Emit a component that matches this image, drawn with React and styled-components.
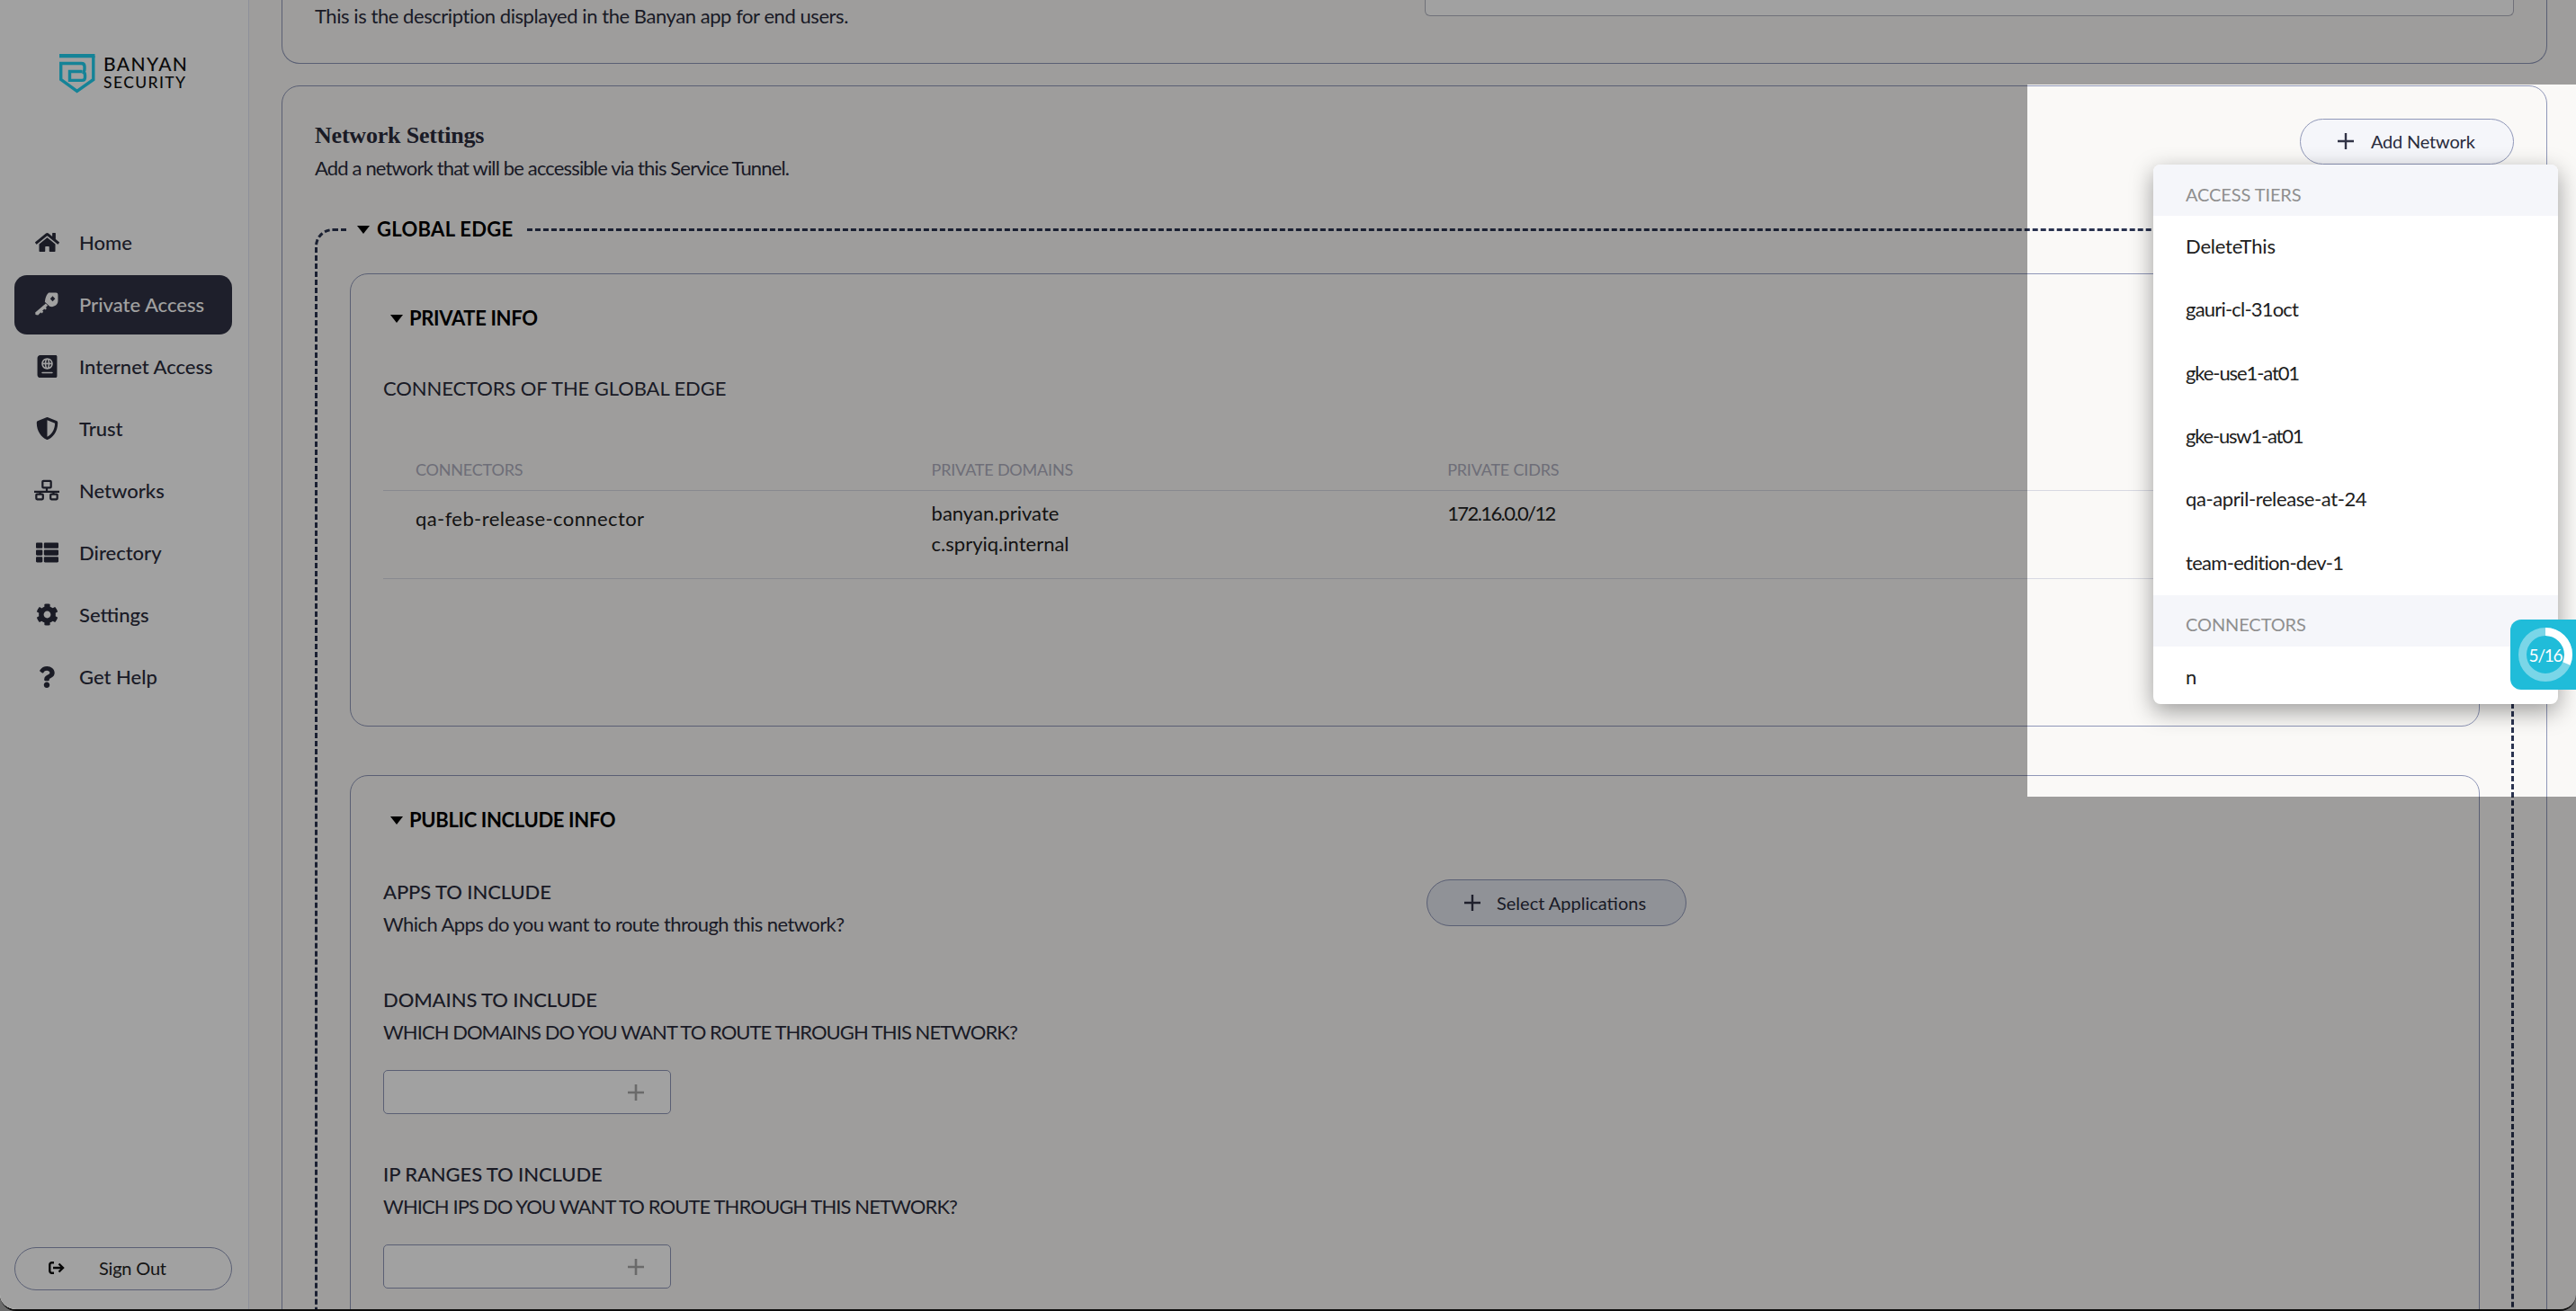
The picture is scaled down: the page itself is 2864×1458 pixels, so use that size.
import React from "react";
import styled, { createGlobalStyle } from "styled-components";
import { FaHome, FaPassport, FaShieldAlt, FaThList, FaCog, FaQuestion } from "react-icons/fa";

const SANS = `"Lato", "Liberation Sans", sans-serif`;
const INK = "#2a2c3c";

const GlobalStyle = createGlobalStyle`
  html, body { margin: 0; padding: 0; background: #6b6b6b; }
  * { box-sizing: border-box; }
  body { font-family: ${SANS}; font-size: 22px; }
`;

const KeyIcon = () => (
  <svg width="26" height="26" viewBox="0 0 24 24" fill="currentColor">
    <path fillRule="evenodd" d="M14 .5h7.5A2 2 0 0 1 23.5 2.500V9c0 2.500-1.500 4-3 4.800l-3 1.200-2.500-.5-1-1L10 10l.5-3c.5-2 1.500-5 3.500-6.500zM18 4l-2.500 2.800L18 9.500l2.600-2.700z" />
    <path d="M11 11.500l2 2L3 23.500l-2.500-.5-.3-2.300z" />
    <path d="M5.500 17l3 3-1.600 1.600-3-3zM9 13.500l3 3-1.600 1.600-3-3z" />
  </svg>
);

const NetworkIcon = () => (
  <svg width="30" height="24" viewBox="0 0 30 24" fill="none" stroke="currentColor" strokeWidth="2.400">
    <rect x="10" y="1.200" width="10" height="8" rx="1" />
    <path d="M15 9v5M0 14h30M7 14v3M23 14v3" />
    <rect x="2.500" y="17" width="8" height="6" rx="1" />
    <rect x="19.500" y="17" width="8" height="6" rx="1" />
  </svg>
);

const SignOutIcon = () => (
  <svg width="18" height="14" viewBox="0 0 18 14" fill="none" stroke="#0c0c0c" strokeWidth="2.400">
    <path d="M6 1.200H3.500a2.200 2.200 0 0 0-2.200 2.200v7.200a2.200 2.200 0 0 0 2.200 2.200H6" />
    <path d="M5 7h11M11.500 2.500L16 7l-4.500 4.500" />
  </svg>
);

const PlusIcon = ({ size = 18, color = "#323447", weight = 2.4 }) => (
  <svg width={size} height={size} viewBox="0 0 18 18" fill="none" stroke={color} strokeWidth={weight}>
    <path d="M9 0v18M0 9h18" />
  </svg>
);

const BanyanMark = () => (
  <svg width="40" height="44" viewBox="0 0 40 44" fill="none" stroke="#22d0f0" strokeWidth="3.400">
    <path strokeWidth="4.200" d="M0 2.100h39.500" />
    <path d="M37.800 2v26.500L19.600 41.300 1.700 28.500V10.500H24.500c2.500 0 3.500 1.500 3.500 3.500v3c0 1.800-1 2.800-2.500 3 2 .3 3 1.500 3 3.400v2.800c0 2-1 3.200-3.500 3.200H11.500V19.500H25" />
  </svg>
);

const NAV = [
  { label: "Home", icon: <FaHome size={27} /> },
  { label: "Private Access", icon: <KeyIcon />, active: true },
  { label: "Internet Access", icon: <FaPassport size={25} /> },
  { label: "Trust", icon: <FaShieldAlt size={25} /> },
  { label: "Networks", icon: <NetworkIcon /> },
  { label: "Directory", icon: <FaThList size={25} /> },
  { label: "Settings", icon: <FaCog size={25} /> },
  { label: "Get Help", icon: <FaQuestion size={24} /> },
];

const ACCESS_TIERS = [
  { name: "DeleteThis", spacing: -0.2 },
  { name: "gauri-cl-31oct", spacing: -0.8 },
  { name: "gke-use1-at01", spacing: -1.1 },
  { name: "gke-usw1-at01", spacing: -1.2 },
  { name: "qa-april-release-at-24", spacing: -0.4 },
  { name: "team-edition-dev-1", spacing: -0.7 },
];

export default function App() {
  return (
    <Page>
      <GlobalStyle />
      <Sidebar>
        <Logo>
          <BanyanMark />
          <LogoText>
            <LogoTop>BANYAN</LogoTop>
            <LogoBottom>SECURITY</LogoBottom>
          </LogoText>
        </Logo>
        <Nav>
          {NAV.map((item) => (
            <NavItem key={item.label} $active={item.active}>
              <NavIcon>{item.icon}</NavIcon>
              {item.label}
            </NavItem>
          ))}
        </Nav>
        <SignOut>
          <SignOutIcon />
          Sign Out
        </SignOut>
      </Sidebar>

      <Main>
        <TopCard>
          <Description>This is the description displayed in the Banyan app for end users.</Description>
          <CutInput />
        </TopCard>

        <Card>
          <CardHeader>
            <div>
              <Title>Network Settings</Title>
              <Subtitle>Add a network that will be accessible via this Service Tunnel.</Subtitle>
            </div>
            <AddButton>
              <PlusIcon />
              Add Network
            </AddButton>
          </CardHeader>

          <EdgeGroup>
            <EdgeLegend>
              <Triangle />
              GLOBAL EDGE
            </EdgeLegend>

            <InnerCard $height={504}>
              <Toggle>
                <Triangle />
                PRIVATE INFO
              </Toggle>
              <ConnectorsTitle>CONNECTORS OF THE GLOBAL EDGE</ConnectorsTitle>
              <TableHead>
                <HeadCell>CONNECTORS</HeadCell>
                <HeadCell>PRIVATE DOMAINS</HeadCell>
                <HeadCell>PRIVATE CIDRS</HeadCell>
              </TableHead>
              <TableRow>
                <RowCell $top={16} $spacing={0.4}>qa-feb-release-connector</RowCell>
                <RowCell $top={8} $line={34}>
                  banyan.private
                  <br />
                  c.spryiq.internal
                </RowCell>
                <RowCell $top={8} $line={34} $spacing={-1.6}>172.16.0.0/12</RowCell>
              </TableRow>
            </InnerCard>

            <InnerCard $gap={54}>
              <Toggle>
                <Triangle />
                PUBLIC INCLUDE INFO
              </Toggle>
              <AppsRow>
                <AppsText>
                  <FieldLabel>APPS TO INCLUDE</FieldLabel>
                  <FieldHelp $spacing={-0.58}>Which Apps do you want to route through this network?</FieldHelp>
                </AppsText>
                <SelectButton>
                  <PlusIcon />
                  Select Applications
                </SelectButton>
              </AppsRow>
              <FieldLabel $gap={54}>DOMAINS TO INCLUDE</FieldLabel>
              <FieldHelp $spacing={-0.95}>WHICH DOMAINS DO YOU WANT TO ROUTE THROUGH THIS NETWORK?</FieldHelp>
              <AddInput>
                <PlusIcon color="#a9a9a9" weight={2.6} />
              </AddInput>
              <FieldLabel $gap={53}>IP RANGES TO INCLUDE</FieldLabel>
              <FieldHelp $spacing={-0.9}>WHICH IPS DO YOU WANT TO ROUTE THROUGH THIS NETWORK?</FieldHelp>
              <AddInput>
                <PlusIcon color="#a9a9a9" weight={2.6} />
              </AddInput>
            </InnerCard>
          </EdgeGroup>
        </Card>
      </Main>

      <Spotlight />

      <Menu>
        <MenuHeading>ACCESS TIERS</MenuHeading>
        {ACCESS_TIERS.map((tier) => (
          <MenuItem key={tier.name} $spacing={tier.spacing}>{tier.name}</MenuItem>
        ))}
        <MenuHeading>CONNECTORS</MenuHeading>
        <MenuItem>n</MenuItem>
      </Menu>

      <Progress>
        <Ring>
          <svg width="60" height="60" viewBox="0 0 60 60" fill="none" strokeWidth="9">
            <circle cx="30" cy="30" r="25.500" stroke="#7ad6e8" />
            <circle cx="30" cy="30" r="25.500" stroke="#fff" strokeDasharray="50 160.200" transform="rotate(-90 30 30)" />
          </svg>
          <RingLabel>5/16</RingLabel>
        </Ring>
      </Progress>
    </Page>
  );
}

const Page = styled.div`
  position: relative;
  display: flex;
  width: 2864px;
  height: 1458px;
  overflow: hidden;
  background: #faf9f7;
  border-bottom: 2px solid #0c0c0c;
  border-radius: 0 0 18px 18px;
`;

const Sidebar = styled.aside`
  display: flex;
  flex-direction: column;
  flex: 0 0 277px;
  padding: 60px 18px 21px 16px;
  background: #fff;
  border-right: 1px solid #e0e5f4;
`;

const Logo = styled.div`
  display: flex;
  gap: 9px;
  height: 44px;
  margin: 0 0 133px 50px;
`;

const LogoText = styled.div`
  display: flex;
  flex-direction: column;
  color: #111;
`;

const LogoTop = styled.span`
  font-size: 21px;
  line-height: 22px;
  font-weight: 500;
  letter-spacing: 1.400px;
`;

const LogoBottom = styled.span`
  font-size: 17.500px;
  line-height: 20px;
  font-weight: 500;
  letter-spacing: 1.400px;
`;

const Nav = styled.nav`
  display: flex;
  flex-direction: column;
  gap: 3.100px;
`;

const NavItem = styled.a`
  display: flex;
  align-items: center;
  gap: 22px;
  height: 66px;
  padding: 0 0 2px 22px;
  border-radius: 14px;
  font-size: 22px;
  font-weight: 500;
  color: ${(p) => (p.$active ? "#fff" : INK)};
  background: ${(p) => (p.$active ? "#303244" : "transparent")};
`;

const NavIcon = styled.span`
  display: flex;
  align-items: center;
  justify-content: center;
  width: 28px;
  flex: none;
`;

const SignOut = styled.button`
  display: flex;
  align-items: center;
  gap: 38px;
  width: 242px;
  height: 48px;
  margin-top: auto;
  padding: 0 0 2px 37px;
  background: transparent;
  border: 1px solid #8f97b8;
  border-radius: 24px;
  font-family: ${SANS};
  font-size: 20px;
  letter-spacing: -0.2px;
  color: #222;
`;

const Main = styled.main`
  flex: 1;
  min-width: 0;
  padding: 0 32px 0 36px;
`;

const TopCard = styled.section`
  display: flex;
  justify-content: space-between;
  height: 71px;
  margin-bottom: 24px;
  padding: 0 36px;
  border: 1px solid #8f97b8;
  border-top: 0;
  border-radius: 0 0 20px 20px;
`;

const Description = styled.p`
  margin: 3px 0 0;
  line-height: 30px;
  letter-spacing: -0.44px;
  color: ${INK};
`;

const CutInput = styled.div`
  width: 1211px;
  height: 18px;
  background: #fff;
  border: 1px solid #b2b4c0;
  border-top: 0;
  border-radius: 0 0 6px 6px;
`;

const Card = styled.section`
  padding: 0 36px;
  border: 1px solid #8f97b8;
  border-radius: 20px;
`;

const CardHeader = styled.header`
  display: flex;
  justify-content: space-between;
  align-items: flex-start;
  height: 144px;
  padding-top: 36px;
`;

const Title = styled.h2`
  margin: 4px 0 0;
  font-family: "Liberation Serif", serif;
  font-size: 26px;
  line-height: 30px;
  font-weight: 700;
  letter-spacing: -0.2px;
  color: ${INK};
`;

const Subtitle = styled.p`
  margin: 6px 0 0;
  line-height: 30px;
  letter-spacing: -0.85px;
  color: ${INK};
`;

const AddButton = styled.button`
  display: flex;
  align-items: center;
  gap: 19px;
  width: 238px;
  height: 51px;
  padding: 0 0 1px 41px;
  background: #f5f6fa;
  border: 1px solid #8f97b8;
  border-radius: 26px;
  font-family: ${SANS};
  font-size: 20px;
  letter-spacing: -0.2px;
  color: ${INK};
`;

const SelectButton = styled(AddButton)`
  gap: 18px;
  width: 289px;
  height: 52px;
  background: #e4e7f0;
  letter-spacing: 0;
  flex: none;
`;

const EdgeGroup = styled.fieldset`
  margin: 0;
  padding: 34px 35px 0 36px;
  min-width: 0;
  border: 3px dashed #2a3350;
  border-radius: 20px;
`;

const EdgeLegend = styled.legend`
  display: flex;
  align-items: center;
  gap: 8px;
  margin-left: -1px;
  padding: 0 13px 0 9px;
  line-height: 30px;
  font-size: 22px;
  font-weight: 700;
  letter-spacing: 0.3px;
  color: #000;
`;

const Triangle = styled.span`
  flex: none;
  width: 0;
  height: 0;
  border-left: 7px solid transparent;
  border-right: 7px solid transparent;
  border-top: 9px solid #000;
`;

const InnerCard = styled.div`
  height: ${(p) => (p.$height ? `${p.$height}px` : "auto")};
  margin-top: ${(p) => p.$gap || 0}px;
  padding: 34px 36px 60px;
  border: 1px solid #8f97b8;
  border-radius: 20px;
`;

const Toggle = styled.div`
  display: flex;
  align-items: center;
  gap: 7px;
  padding-left: 8px;
  line-height: 30px;
  font-size: 22px;
  font-weight: 700;
  letter-spacing: -0.35px;
  color: #000;
`;

const ConnectorsTitle = styled.h3`
  margin: 48px 0 53px;
  line-height: 30px;
  font-size: 22px;
  font-weight: 400;
  letter-spacing: -0.1px;
  color: ${INK};
`;

const TableHead = styled.div`
  display: grid;
  grid-template-columns: repeat(5, 573.600px);
  align-items: center;
  height: 46px;
  padding-left: 36px;
  padding-bottom: 1px;
  border-bottom: 1px solid #d8d9e2;
`;

const HeadCell = styled.span`
  font-size: 18px;
  letter-spacing: -0.2px;
  color: #aeaebe;
`;

const TableRow = styled.div`
  display: grid;
  grid-template-columns: repeat(5, 573.600px);
  align-items: start;
  height: 98px;
  padding-left: 36px;
  border-bottom: 1px solid #d8d9e2;
`;

const RowCell = styled.div`
  padding-top: ${(p) => p.$top}px;
  line-height: ${(p) => p.$line || 30}px;
  letter-spacing: ${(p) => p.$spacing || 0}px;
  color: #202020;
`;

const AppsRow = styled.div`
  display: flex;
  margin-top: 51px;
`;

const AppsText = styled.div`
  flex: 0 0 1160px;
`;

const FieldLabel = styled.div`
  margin-top: ${(p) => p.$gap || 0}px;
  padding-bottom: 2px;
  line-height: 28px;
  font-weight: 500;
  letter-spacing: -0.1px;
  color: ${INK};
`;

const FieldHelp = styled.div`
  margin-top: 6px;
  padding-bottom: 2px;
  line-height: 28px;
  letter-spacing: ${(p) => p.$spacing || 0}px;
  color: ${INK};
`;

const AddInput = styled.div`
  display: flex;
  align-items: center;
  justify-content: flex-end;
  width: 320px;
  height: 49px;
  margin-top: 26px;
  padding-right: 29px;
  background: #fff;
  border: 1px solid #8f97b8;
  border-radius: 5px;
`;

const Spotlight = styled.div`
  position: absolute;
  left: 2254px;
  top: 94px;
  width: 610px;
  height: 792px;
  box-shadow: 0 0 0 3000px rgba(0, 0, 0, 0.37);
`;

const Menu = styled.div`
  position: absolute;
  left: 2394px;
  top: 183px;
  width: 450px;
  height: 600px;
  overflow: hidden;
  background: #fff;
  border-radius: 8px;
  box-shadow: 0 8px 26px rgba(0, 0, 0, 0.38);
`;

const MenuHeading = styled.div`
  display: flex;
  align-items: center;
  height: 57px;
  padding: 8px 0 0 36px;
  background: #f5f6fa;
  font-size: 20px;
  letter-spacing: -0.1px;
  color: #8f8f8f;
`;

const MenuItem = styled.div`
  display: flex;
  align-items: center;
  height: 70.330px;
  padding: 0 0 3px 36px;
  letter-spacing: ${(p) => p.$spacing || 0}px;
  color: #202020;
`;

const Progress = styled.div`
  position: absolute;
  left: 2791px;
  top: 689px;
  display: flex;
  align-items: center;
  width: 73px;
  height: 78px;
  padding-left: 9px;
  background: #20bcd9;
  border-radius: 12px 0 0 12px;
`;

const Ring = styled.div`
  position: relative;
  width: 60px;
  height: 60px;
`;

const RingLabel = styled.span`
  position: absolute;
  inset: 0;
  display: flex;
  align-items: center;
  justify-content: center;
  font-size: 19px;
  letter-spacing: -1.200px;
  color: #fff;
`;
